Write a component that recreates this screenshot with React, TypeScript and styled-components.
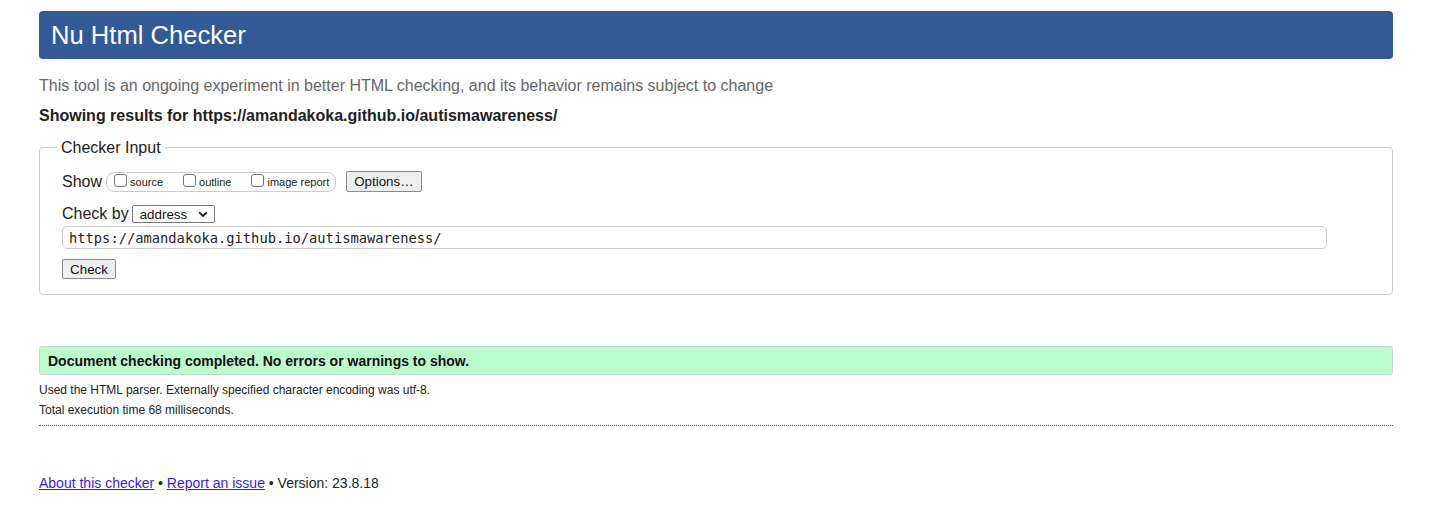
import React from "react";
import styled, { createGlobalStyle } from "styled-components";

const GlobalStyle = createGlobalStyle`
  html, body { margin: 0; padding: 0; background: #fff; }
  body { font-family: "Liberation Sans", Arial, sans-serif; color: #222; }
`;

const Page = styled.div`
  width: 1354px;
  margin: 0 0 0 39px;
  padding-top: 11px;
`;

const Header = styled.h1`
  margin: 0;
  height: 48px;
  line-height: 48px;
  padding-left: 12px;
  background: #335a96;
  color: #fff;
  font-weight: normal;
  font-size: 25.6px;
  border-radius: 4px;
`;

const Intro = styled.p`
  margin: 17px 0 0;
  font-size: 16px;
  line-height: 19px;
  color: #666;
`;

const Showing = styled.p`
  margin: 11px 0 0;
  font-size: 16px;
  line-height: 19px;
  font-weight: bold;
  color: #222;
`;

const InputFieldset = styled.fieldset`
  margin: 13px 0 0;
  padding: 14px 22px 15px 22px;
  border: 1px solid #cccccc;
  border-radius: 4px;
  display: flex;
  flex-direction: column;
`;

const Legend = styled.legend`
  margin-left: -5px;
  padding: 0 4px;
  font-size: 16px;
  line-height: 19px;
  color: #222;
`;

const Row = styled.div<{ $mt?: number }>`
  display: flex;
  align-items: center;
  margin-top: ${(p) => p.$mt ?? 0}px;
  font-size: 16px;
  color: #222;
`;

const ShowLabel = styled.span`
  margin-right: 4px;
`;

const OptionGroup = styled.span`
  display: inline-flex;
  align-items: center;
  height: 18px;
  padding: 0 6px 0 6px;
  border: 1px solid #cccccc;
  border-radius: 8px;
`;

const OptionLabel = styled.label<{ $gap?: number }>`
  display: inline-flex;
  align-items: center;
  font-size: 11px;
  color: #222;
  margin-right: ${(p) => p.$gap ?? 0}px;
`;

const Box = styled.span`
  display: inline-block;
  width: 11px;
  height: 11px;
  border: 1px solid #767676;
  border-radius: 3px;
  background: #fff;
  margin: 0 3px 0 1px;
  position: relative;
  top: -1px;
`;

const Button = styled.button`
  font-family: "Liberation Sans", Arial, sans-serif;
  font-size: 13.33px;
  color: #111;
  background: #efefef;
  border: 1px solid #8a8a8a;
  border-radius: 2px;
  padding: 0 8px;
  cursor: pointer;
`;

const OptionsButton = styled(Button)`
  height: 21px;
  margin-left: 10px;
  padding: 0 7px;
`;

const CheckButton = styled(Button)`
  height: 20px;
  width: 54px;
  padding: 0;
`;

const SelectBox = styled.span`
  display: inline-flex;
  align-items: center;
  justify-content: space-between;
  width: 83px;
  height: 18px;
  box-sizing: border-box;
  margin-left: 3px;
  padding: 0 6px 0 7px;
  border: 1px solid #777;
  border-radius: 2px;
  background: #fff;
  font-size: 13.33px;
  color: #111;
`;

const UrlInput = styled.div`
  box-sizing: border-box;
  width: 1265px;
  height: 23px;
  margin-top: 3px;
  padding: 0 6px;
  display: flex;
  align-items: center;
  border: 1px solid #cccccc;
  border-radius: 5px;
  font-family: "DejaVu Sans Mono", "Liberation Mono", monospace;
  font-size: 13.75px;
  color: #222;
`;

const ButtonRow = styled.div`
  margin-top: 10px;
  display: flex;
`;

const Success = styled.div`
  margin-top: 51px;
  height: 29px;
  box-sizing: border-box;
  display: flex;
  align-items: center;
  padding-left: 8px;
  background: #bbfccc;
  border: 1px solid #c8d8c8;
  border-radius: 3px;
  font-weight: bold;
  font-size: 14px;
  color: #111;
`;

const Detail = styled.p<{ $mt: number }>`
  margin: ${(p) => p.$mt}px 0 0;
  font-size: 12px;
  line-height: 14px;
  color: #222;
`;

const Divider = styled.hr`
  margin: 8px 0 0;
  border: none;
  border-top: 1px dotted #555;
  height: 0;
`;

const Footer = styled.p`
  margin: 49px 0 0;
  font-size: 14px;
  line-height: 17px;
  color: #222;
`;

const Link = styled.a`
  color: #3b1cf0;
  text-decoration: underline;
`;

const Chevron = () => (
  <svg width="10" height="7" viewBox="0 0 10 7">
    <path d="M1.2 1.3 L5 5 L8.8 1.3" fill="none" stroke="#111" strokeWidth="1.8" />
  </svg>
);

export default function App() {
  return (
    <>
      <GlobalStyle />
      <Page>
        <Header>Nu Html Checker</Header>
        <Intro>
          This tool is an ongoing experiment in better HTML checking, and its behavior remains subject to change
        </Intro>
        <Showing>Showing results for https://amandakoka.github.io/autismawareness/</Showing>
        <InputFieldset>
          <Legend>Checker Input</Legend>
          <Row>
            <ShowLabel>Show</ShowLabel>
            <OptionGroup>
              <OptionLabel $gap={19}>
                <Box />
                source
              </OptionLabel>
              <OptionLabel $gap={19}>
                <Box />
                outline
              </OptionLabel>
              <OptionLabel>
                <Box />
                image report
              </OptionLabel>
            </OptionGroup>
            <OptionsButton>Options…</OptionsButton>
          </Row>
          <Row $mt={13}>
            <span>Check by</span>
            <SelectBox>
              address
              <Chevron />
            </SelectBox>
          </Row>
          <UrlInput>https://amandakoka.github.io/autismawareness/</UrlInput>
          <ButtonRow>
            <CheckButton>Check</CheckButton>
          </ButtonRow>
        </InputFieldset>
        <Success>Document checking completed. No errors or warnings to show.</Success>
        <Detail $mt={8}>Used the HTML parser. Externally specified character encoding was utf-8.</Detail>
        <Detail $mt={6}>Total execution time 68 milliseconds.</Detail>
        <Divider />
        <Footer>
          <Link href="#">About this checker</Link> • <Link href="#">Report an issue</Link> • Version: 23.8.18
        </Footer>
      </Page>
    </>
  );
}
